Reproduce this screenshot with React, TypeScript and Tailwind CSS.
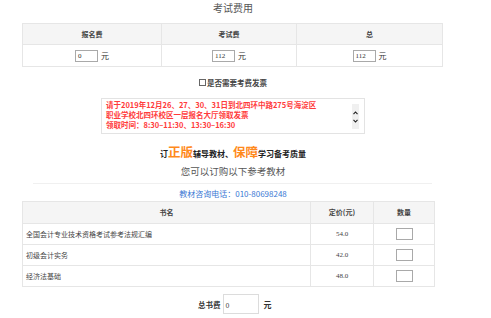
import React from 'react';

const cjk = { fontFamily: '"Noto Sans CJK SC", "Liberation Sans", sans-serif' };

const books = [
  { name: '全国会计专业技术资格考试参考法规汇编', price: '54.0' },
  { name: '初级会计实务', price: '42.0' },
  { name: '经济法基础', price: '48.0' },
];

function FeeCell({ value }: { value: string }) {
  return (
    <td className="border border-[#e6e6e6] h-[22px] text-center">
      <div className="flex items-center justify-center gap-[3px]">
        <span className="w-[23px] h-[12px] border border-[#a9a9a9] bg-white text-[7px] leading-[10px] pl-[2px] text-left text-[#333]" style={{ fontFamily: '"Liberation Serif", serif' }}>
          {value}
        </span>
        <span className="text-[8px] text-[#333]">元</span>
      </div>
    </td>
  );
}

export default function App() {
  return (
    <div className="w-[491px] h-[318px] overflow-hidden bg-white text-[#333]" style={cjk}>
      <div className="w-[466px]">
        <div className="h-[23px] text-center text-[10px] leading-[16px] text-[#555]">考试费用</div>

        <table className="ml-[22px] w-[421px] border-collapse table-fixed">
          <tbody>
            <tr className="bg-[#f5f5f5]">
              <th className="border border-[#e6e6e6] h-[21px] w-[139px] text-[7px] font-bold text-[#444]">报名费</th>
              <th className="border border-[#e6e6e6] h-[21px] w-[135px] text-[7px] font-bold text-[#444]">考试费</th>
              <th className="border border-[#e6e6e6] h-[21px] text-[7px] font-bold text-[#444]">总</th>
            </tr>
            <tr>
              <FeeCell value="0" />
              <FeeCell value="112" />
              <FeeCell value="112" />
            </tr>
          </tbody>
        </table>

        <div className="mt-[10px] h-[11px] flex items-center justify-center text-[7.5px] text-[#444] font-bold">
          <span className="w-[7px] h-[7px] border border-[#666] mr-[1px]" />
          是否需要考费发票
        </div>

        <div className="mt-[10px] ml-[101px] w-[264px] h-[36px] border border-[#e3e3e3] flex">
          <div className="flex-1 pl-[4px] pt-[1px] text-[7.5px] leading-[10px] text-[#ff3b3b] font-bold whitespace-nowrap">
            <div className="h-[10px]">请于2019年12月26、27、30、31日到北四环中路275号海淀区</div>
            <div className="h-[10px]">职业学校北四环校区一层报名大厅领取发票</div>
            <div className="h-[10px]">领取时间：8:30–11:30、13:30–16:30</div>
          </div>
          <div className="w-[7px] mr-[5px] mt-[5px] h-[25px] bg-[#f0f0f0] flex flex-col items-center justify-center gap-[4px]">
            <svg width="5" height="4" viewBox="0 0 5 4"><path d="M0.5 3.2 L2.5 1 L4.5 3.2" fill="none" stroke="#222" strokeWidth="1.1" /></svg>
            <svg width="5" height="4" viewBox="0 0 5 4"><path d="M0.5 0.8 L2.5 3 L4.5 0.8" fill="none" stroke="#222" strokeWidth="1.1" /></svg>
          </div>
        </div>

        <div className="mt-[9px] h-[16px] flex items-end justify-center font-bold text-[#222]">
          <span className="text-[8px] leading-[10px]">订</span>
          <span className="text-[12.5px] leading-[15px] text-[#ff8a1c]">正版</span>
          <span className="text-[8px] leading-[10px]">辅导教材、</span>
          <span className="text-[12.5px] leading-[15px] text-[#ff8a1c]">保障</span>
          <span className="text-[8px] leading-[10px]">学习备考质量</span>
        </div>

        <div className="mt-[6px] h-[12px] text-center text-[9.5px] leading-[12px] text-[#555]">您可以订购以下参考教材</div>

        <div className="mt-[6px] ml-[33px] w-[399px] border-t border-[#f0f0f0]" />

        <div className="mt-[4px] h-[12px] text-center text-[8px] leading-[12px] text-[#3a78d4]">教材咨询电话：010-80698248</div>

        <table className="mt-[1px] ml-[22px] w-[413px] border-collapse table-fixed">
          <tbody>
            <tr className="bg-[#f5f5f5]">
              <th className="border border-[#e6e6e6] h-[22px] w-[288px] text-[7px] font-bold text-[#444]">书名</th>
              <th className="border border-[#e6e6e6] h-[22px] w-[63px] text-[7px] font-bold text-[#444]">定价(元)</th>
              <th className="border border-[#e6e6e6] h-[22px] text-[7px] font-bold text-[#444]">数量</th>
            </tr>
            {books.map((b, i) => (
              <tr key={i}>
                <td className="border border-[#e6e6e6] h-[21px] pl-[3px] text-[7px] text-[#444]">{b.name}</td>
                <td className="border border-[#e6e6e6] h-[21px] text-center text-[7px] text-[#444]" style={{ fontFamily: '"Liberation Serif", serif' }}>{b.price}</td>
                <td className="border border-[#e6e6e6] h-[21px]">
                  <div className="mx-auto w-[17px] h-[12px] border border-[#a9a9a9]" />
                </td>
              </tr>
            ))}
          </tbody>
        </table>

        <div className="mt-[7px] flex items-start">
          <span className="ml-[198px] mt-[6px] text-[7.5px] leading-[10px] font-bold text-[#333]">总书费</span>
          <span className="ml-[2px] w-[36px] h-[20px] border border-[#dcdcdc] text-[7px] leading-[20px] pl-[2px] text-[#333]">0</span>
          <span className="ml-[5px] mt-[6px] text-[8px] leading-[10px] font-bold text-[#333]">元</span>
        </div>
      </div>
    </div>
  );
}
